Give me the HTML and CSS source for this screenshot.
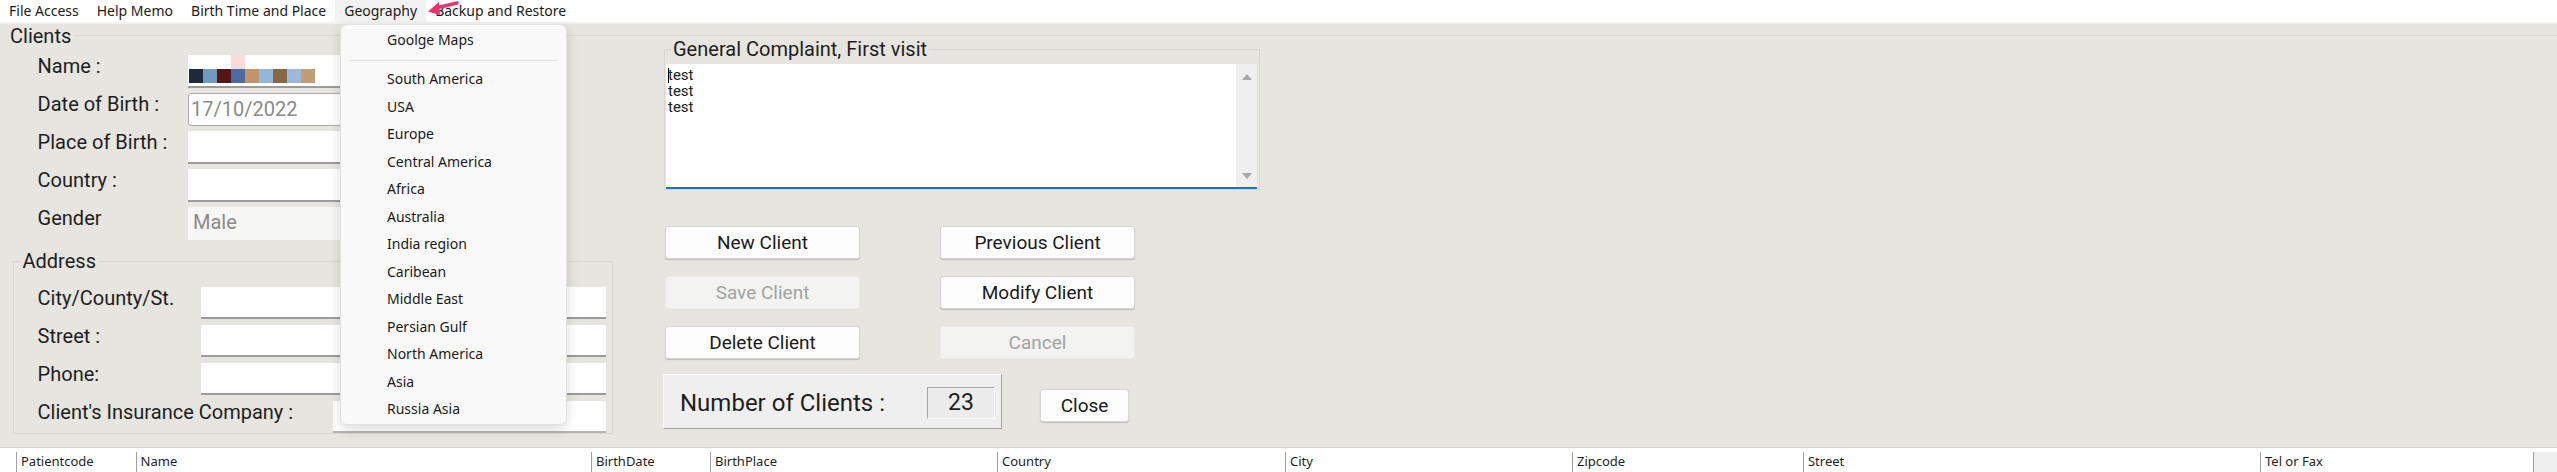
FILE: index.html
```html
<html><head>
<meta charset="UTF-8">
<meta name="viewport" content="width=device-width, initial-scale=1.0">
<title>Clients</title>
<link rel="stylesheet" href="styles.css">
</head>
<body>
    <!-- top menu -->
    <div class="menubar">
        <span class="menu-item">File Access</span>
        <span class="menu-item">Help Memo</span>
        <span class="menu-item">Birth Time and Place</span>
        <span class="menu-item open">Geography</span>
        <span class="menu-item">Backup and Restore</span>
    </div>

    <div class="panel">
        <div class="panel-title">Clients</div>
        <div class="panel-body">

            <div class="client-col">
                <div class="client-form">
                    <label>Name :</label>
                    <div class="field name-field">
                        <div class="redact-top"></div>
                        <div class="redact-row">
                            <span></span><span></span><span></span><span></span><span></span>
                            <span></span><span></span><span></span><span></span>
                        </div>
                    </div>
                    <label>Date of Birth :</label>
                    <div class="field date-field">17/10/2022</div>
                    <label>Place of Birth :</label>
                    <div class="field"></div>
                    <label>Country :</label>
                    <div class="field"></div>
                    <label>Gender</label>
                    <div class="field gender-field">Male</div>
                </div>

                <fieldset class="address">
                    <legend>Address</legend>
                    <div class="addr-rows">
                        <div class="addr-row"><label>City/County/St.</label><div class="field"></div></div>
                        <div class="addr-row"><label>Street :</label><div class="field"></div></div>
                        <div class="addr-row"><label>Phone:</label><div class="field"></div></div>
                        <div class="addr-row insurance"><label>Client's Insurance Company :</label><div class="field flat"></div></div>
                    </div>
                </fieldset>
            </div>

            <div class="complaint-col">
                <fieldset class="complaint">
                    <legend>General Complaint, First visit</legend>
                    <div class="memo">
                        <div class="memo-text"><span class="caret"></span>test<br>test<br>test</div>
                        <div class="memo-scroll">
                            <svg width="10" height="6" viewBox="0 0 10 6"><polygon points="0,6 5,0 10,6" fill="#a6a6a6"/></svg>
                            <svg width="10" height="6" viewBox="0 0 10 6"><polygon points="0,0 10,0 5,6" fill="#a6a6a6"/></svg>
                        </div>
                    </div>
                </fieldset>

                <div class="actions">
                    <button class="btn">New Client</button>
                    <button class="btn">Previous Client</button>
                    <button class="btn" disabled>Save Client</button>
                    <button class="btn">Modify Client</button>
                    <button class="btn">Delete Client</button>
                    <button class="btn" disabled>Cancel</button>
                </div>

                <div class="count-row">
                    <div class="count-box">
                        <span>Number of Clients :</span>
                        <span class="count-value">23</span>
                    </div>
                    <button class="btn close-btn">Close</button>
                </div>
            </div>

        </div>
    </div>

    <!-- table header -->
    <div class="grid-head">
        <div class="col-rowhead"></div>
        <div class="col c-code">Patientcode</div>
        <div class="col c-name">Name</div>
        <div class="col c-bdate">BirthDate</div>
        <div class="col c-bplace">BirthPlace</div>
        <div class="col c-country">Country</div>
        <div class="col c-city">City</div>
        <div class="col c-zip">Zipcode</div>
        <div class="col c-street">Street</div>
        <div class="col c-tel">Tel or Fax</div>
        <div class="col c-scroll"></div>
    </div>

    <!-- open Geography menu -->
    <div class="geo-menu">
        <div class="geo-item">Goolge Maps</div>
        <div class="geo-sep"></div>
        <div class="geo-item">South America</div>
        <div class="geo-item">USA</div>
        <div class="geo-item">Europe</div>
        <div class="geo-item">Central America</div>
        <div class="geo-item">Africa</div>
        <div class="geo-item">Australia</div>
        <div class="geo-item">India region</div>
        <div class="geo-item">Caribean</div>
        <div class="geo-item">Middle East</div>
        <div class="geo-item">Persian Gulf</div>
        <div class="geo-item">North America</div>
        <div class="geo-item">Asia</div>
        <div class="geo-item">Russia Asia</div>
    </div>

    <svg class="pointer" width="46" height="20" viewBox="0 0 46 20">
        <line x1="14" y1="7.5" x2="33" y2="3" stroke="#e8336c" stroke-width="3.5" stroke-linecap="round"/>
        <polygon points="4,11.5 15,2 16,15" fill="#e8336c"/>
    </svg>
</body></html>
```

FILE: styles.css
```css
body {
    margin: 0;
    width: 2557px;
    height: 472px;
    overflow: hidden;
    position: relative;
    background-color: #ffffff;
    font-family: Roboto, "Liberation Sans", sans-serif;
    color: #1e1e1e;
}

/* menu bar */
.menubar {
    display: flex;
    height: 22px;
    background-color: #ffffff;
    border-bottom: 2px solid #f1f1ef;
    font-family: "Noto Sans", sans-serif;
    font-size: 14px;
    line-height: 22px;
    color: #1a1a1a;
}

.menu-item {
    padding: 0 9px;
}

.menu-item.open {
    background-color: #f2f2f2;
}

/* main grey panel */
.panel {
    height: 423px;
    background-color: #e6e5e0;
    border-bottom: 1px solid #d6d5d0;
}

.panel-title {
    display: flex;
    align-items: center;
    height: 23px;
    padding-left: 10px;
    font-size: 20px;
}

.panel-title::after {
    content: "";
    flex: 1;
    margin-left: 3px;
    border-top: 1px solid #d8d7d2;
}

.panel-body {
    display: flex;
    gap: 51px;
    padding-left: 13px;
}

.client-col {
    width: 600px;
}

.client-form {
    display: grid;
    grid-template-columns: 150.4px 300px;
    row-gap: 5px;
    padding: 8px 0 0 24.6px;
}

label {
    font-size: 20px;
    line-height: 23px;
}

.field {
    height: 33px;
    box-sizing: border-box;
    background-color: #ffffff;
    border-bottom: 2px solid #9b9b9b;
}

.name-field {
    padding-left: 1px;
}

.redact-top {
    width: 14px;
    height: 14px;
    margin-left: 42px;
    background-color: #fadcdc;
}

.redact-row {
    display: flex;
}

.redact-row span {
    width: 14px;
    height: 14px;
}

.redact-row span:nth-child(1) { background-color: #1c2a3a; }
.redact-row span:nth-child(2) { background-color: #7299be; }
.redact-row span:nth-child(3) { background-color: #541616; }
.redact-row span:nth-child(4) { background-color: #4f6a9c; }
.redact-row span:nth-child(5) { background-color: #c0956c; }
.redact-row span:nth-child(6) { background-color: #96b6d9; }
.redact-row span:nth-child(7) { background-color: #866849; }
.redact-row span:nth-child(8) { background-color: #9ab9db; }
.redact-row span:nth-child(9) { background-color: #c29c74; }

.date-field {
    border: 1px solid #a9a9a9;
    border-radius: 3px;
    padding-left: 2px;
    font-size: 20px;
    line-height: 31px;
    color: #8a8a8a;
}

.gender-field {
    border: none;
    background-color: #f7f7f6;
    padding-left: 5px;
    font-size: 20px;
    line-height: 31px;
    color: #8a8a8a;
}

fieldset {
    margin: 0;
    padding: 0;
    min-width: 0;
    border: 1px solid #d8d7d2;
}

legend {
    padding: 0 2px;
    font-size: 20px;
    line-height: 23px;
}

.address {
    margin-top: 9.5px;
}

.address legend {
    margin-left: 6.5px;
}

.addr-rows {
    display: flex;
    flex-direction: column;
    gap: 6px;
    padding: 14.5px 6px 0 23.6px;
}

.addr-row {
    display: flex;
    height: 32px;
}

.addr-row label {
    width: 163.4px;
    flex-shrink: 0;
}

.addr-row .field {
    flex: 1;
    height: 32px;
}

.addr-row.insurance label {
    width: 295.4px;
}

.field.flat {
    border-bottom-color: #b5b5b5;
}

/* right side */
.complaint-col {
    width: 596px;
    margin-top: -9.5px;
}

.complaint {
    padding: 3px 2px 0 1px;
}

.complaint legend {
    margin-left: 5px;
}

.memo {
    display: flex;
    height: 125px;
    box-sizing: border-box;
    background-color: #ffffff;
    border-bottom: 2px solid #1c6fc6;
}

.memo-text {
    flex: 1;
    padding: 3px 2px;
    font-size: 15px;
    line-height: 16px;
    color: #222;
}

.caret {
    display: inline-block;
    width: 1px;
    height: 15px;
    margin-right: -1px;
    vertical-align: -3px;
    background-color: #000;
}

.memo-scroll {
    width: 21px;
    display: flex;
    flex-direction: column;
    justify-content: space-between;
    align-items: center;
    padding: 10.5px 0 7.5px;
    background-color: #efefef;
}

.actions {
    display: grid;
    grid-template-columns: 195px 195px;
    column-gap: 80px;
    row-gap: 17px;
    margin: 36.5px 0 0 1px;
}

.btn {
    height: 33px;
    padding: 0;
    background-color: #fdfdfd;
    border: 1px solid #d6d6d4;
    border-radius: 3px;
    box-shadow: 0 1px 1px rgba(0, 0, 0, 0.18);
    font-family: Roboto, "Liberation Sans", sans-serif;
    font-size: 19px;
    color: #1a1a1a;
}

.btn:disabled {
    background-color: #f3f3f2;
    border-color: #ebebea;
    box-shadow: none;
    color: #a2a2a2;
}

.count-row {
    display: flex;
    align-items: flex-start;
    margin: 15px 0 0 -1.5px;
}

.count-box {
    display: flex;
    align-items: center;
    width: 339.5px;
    height: 55px;
    box-sizing: border-box;
    padding: 2px 6px 0 16.5px;
    background-color: #efefef;
    border: 1px solid;
    border-color: #f7f7f7 #a3a3a3 #a3a3a3 #f7f7f7;
    font-size: 24px;
}

.count-value {
    margin-left: auto;
    width: 68px;
    height: 32px;
    box-sizing: border-box;
    border: 1px solid;
    border-color: #a8a8a8 #fbfbfb #fbfbfb #a8a8a8;
    background-color: #ececec;
    text-align: center;
    line-height: 30px;
    font-size: 23px;
}

.close-btn {
    width: 89px;
    margin: 15px 0 0 38px;
}

/* table header */
.grid-head {
    display: flex;
    height: 24px;
    background-color: #ffffff;
    font-family: "Noto Sans", sans-serif;
    font-size: 13px;
    color: #1e1e1e;
}

.col-rowhead {
    width: 16px;
}

.col {
    margin-top: 4px;
    height: 20px;
    line-height: 19px;
    box-sizing: border-box;
    padding-left: 4px;
    border-left: 1px solid #a0a0a0;
    white-space: nowrap;
}

.c-code { width: 119.6px; }
.c-name { width: 455.4px; }
.c-bdate { width: 119px; }
.c-bplace { width: 287px; }
.c-country { width: 288px; }
.c-city { width: 287px; }
.c-zip { width: 231px; }
.c-street { width: 457px; }
.c-tel { width: 273px; }
.c-scroll { width: 24px; background-color: #efefef; }

/* dropdown */
.geo-menu {
    position: absolute;
    left: 340px;
    top: 24px;
    width: 227px;
    height: 401px;
    box-sizing: border-box;
    padding-top: 2px;
    background-color: #f9f9f9;
    border: 1px solid #e2e2e2;
    border-radius: 7px;
    box-shadow: 0 4px 12px rgba(0, 0, 0, 0.14);
    font-family: "Noto Sans", sans-serif;
    font-size: 14px;
    color: #1a1a1a;
}

.geo-item {
    height: 27.5px;
    line-height: 26.5px;
    padding-left: 46px;
}

.geo-sep {
    margin: 5px 9px 5.5px;
    border-top: 1px solid #e0e0e0;
}

.pointer {
    position: absolute;
    left: 424px;
    top: 0;
}
```
